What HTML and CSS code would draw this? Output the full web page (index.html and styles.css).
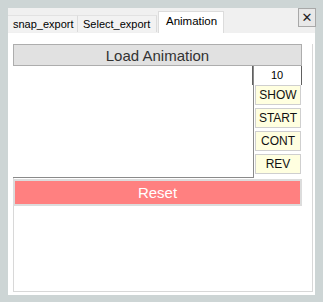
FILE: index.html
```html
<!DOCTYPE html>
<html lang="en">
<head>
  <meta charset="UTF-8">
  <title>Animation</title>
  <link rel="stylesheet" href="styles.css">
</head>
<body>
  <div class="panel">
    <!-- Tabs -->
    <div class="tabbar">
      <div class="tab">snap_export</div>
      <div class="tab">Select_export</div>
      <div class="tab active">Animation</div>
      <button class="close">&#x2715;</button>
    </div>

    <div class="content">
      <div class="frame">
        <button class="load">Load Animation</button>
        <div class="middle">
          <div class="canvas"></div>
          <div class="controls">
            <div class="frames">10</div>
            <button class="ctl">SHOW</button>
            <button class="ctl">START</button>
            <button class="ctl">CONT</button>
            <button class="ctl">REV</button>
          </div>
        </div>
        <button class="reset">Reset</button>
      </div>
    </div>
  </div>
</body>
</html>
```

FILE: styles.css
```css
body {
  margin: 0;
  padding: 8px;
  background-color: #cdd5d5;
  font-family: "Liberation Sans", Arial, sans-serif;
}
.panel {
  width: 307px;
  height: 287px;
  background: #fff;
  display: flex;
  flex-direction: column;
}
.tabbar {
  height: 25px;
  background: #f0f0f0;
  display: flex;
  align-items: flex-end;
  border-bottom: 1px solid #f0f0f0;
  box-sizing: border-box;
}
.tab {
  height: 17px;
  box-sizing: border-box;
  padding: 0 5px 0 5px;
  font-size: 11px;
  line-height: 17px;
  color: #000;
  background: #f2f2f2;
  border-top: 1px solid #e2e2e2;
  border-right: 1px solid #dcdcdc;
}
.tab:first-child {
  width: 70px;
}
.tab:nth-child(2) {
  width: 79px;
}
.tab.active {
  height: 22px;
  width: 66px;
  margin-bottom: -1px;
  margin-left: 1px;
  background: #fff;
  border: 1px solid #dcdcdc;
  border-bottom: none;
  line-height: 18px;
  padding-left: 7px;
  font-size: 11.5px;
}
.close {
  margin-left: auto;
  margin-right: -1px;
  align-self: flex-start;
  width: 18px;
  height: 19px;
  padding: 0;
  border: 1px solid #a8a8a8;
  background: #e8e8e8;
  font-size: 13px;
  line-height: 16px;
  color: #222;
  font-family: "DejaVu Sans", sans-serif;
}
.content {
  flex: 1;
  padding: 12px 3px 3px 5px;
}
.frame {
  width: 300px;
  height: 248px;
  box-sizing: border-box;
  border: 1px solid #d8d8d8;
  border-top: none;
  margin-top: -1px;
}
.load {
  display: block;
  width: 289px;
  height: 22px;
  margin-left: -1px;
  padding: 0;
  background: #e1e1e1;
  border: 1px solid #adadad;
  font-family: inherit;
  font-size: 15px;
  color: #333;
}
.middle {
  display: flex;
  height: 112px;
  margin-left: -1px;
}
.canvas {
  width: 241px;
  height: 112px;
  box-sizing: border-box;
  background: #fff;
  border-right: 1px solid #8a8a8a;
  border-bottom: 1px solid #8a8a8a;
}
.controls {
  display: flex;
  flex-direction: column;
  align-items: flex-start;
}
.frames {
  width: 50px;
  height: 19px;
  margin-left: -2px;
  box-sizing: border-box;
  border-left: 1px solid #606060;
  border-right: 1px solid #606060;
  text-align: center;
  font-size: 11px;
  line-height: 19px;
}
.ctl {
  width: 46px;
  height: 20px;
  margin: 0 0 3px 1px;
  padding: 0;
  background: #ffffe0;
  border: 1px solid #cfcfcf;
  font-family: inherit;
  font-size: 12px;
  color: #111;
}
.reset {
  display: block;
  width: 289px;
  height: 27px;
  margin: 1px 0 0 -1px;
  padding: 0;
  background: #ff8080;
  border: 2px solid #dcdcdc;
  font-family: inherit;
  font-size: 15px;
  color: #fff;
}
```
